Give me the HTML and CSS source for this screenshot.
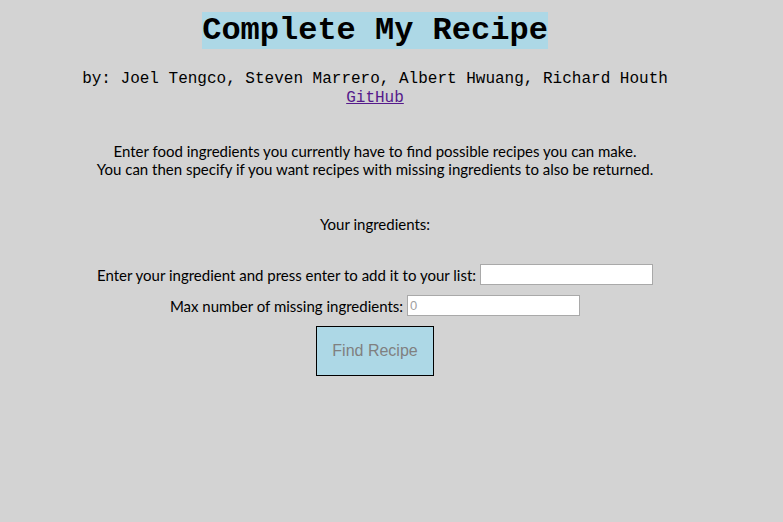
FILE: index.html
```html
<!DOCTYPE html>
<html>
<head>
<meta charset="utf-8">
<link rel="stylesheet" href="styles.css">
</head>
<body>
<div class="page">
<header class="header">
  <h1 class="title"><span class="title-text">Complete My Recipe</span></h1>
  <p class="authors">by: Joel Tengco, Steven Marrero, Albert Hwuang, Richard Houth<br><a class="github" href="#">GitHub</a></p>
</header>
<main class="main">
  <p class="intro">Enter food ingredients you currently have to find possible recipes you can make.<br>You can then specify if you want recipes with missing ingredients to also be returned.</p>
  <p class="list-label">Your ingredients:</p>
  <div class="form">
    <label class="row">Enter your ingredient and press enter to add it to your list: <input class="field" type="text"></label>
    <label class="row">Max number of missing ingredients: <input class="field" type="text" placeholder="0"></label>
    <button class="find">Find Recipe</button>
  </div>
</main>
</div>
</body>
</html>
```
FILE: styles.css
```css
html, body {
  margin: 0;
  padding: 0;
}
body {
  background: #d3d3d3;
  font-family: "Lato", "Open Sans", sans-serif;
  font-size: 15px;
  color: #000;
  text-align: center;
}
.page {
  width: 750px;
}
.header {
  padding-top: 13px;
}
.title {
  margin: 0;
  font-family: "Liberation Mono", "Courier New", monospace;
  font-size: 32px;
  font-weight: bold;
  line-height: 36px;
}
.title-text {
  background: #add8e6;
}
.authors {
  margin: 21px 0 0;
  font-family: "Liberation Mono", "Courier New", monospace;
  font-size: 16px;
  line-height: 19px;
}
.github {
  color: #551a8b;
}
.main {
  padding-top: 34px;
}
.intro {
  margin: 0;
  line-height: 18px;
}
.list-label {
  margin: 37px 0 0;
  line-height: 18px;
}
.form {
  margin-top: 31px;
  display: flex;
  flex-direction: column;
  align-items: center;
  gap: 10px;
}
.row {
  display: flex;
  align-items: center;
  gap: 4px;
  height: 21px;
}
.field {
  width: 173px;
  height: 21px;
  box-sizing: border-box;
  border: 1px solid #a9a9a9;
  background: #fff;
  font-family: "Liberation Sans", Arial, sans-serif;
  font-size: 13px;
  padding: 1px 2px;
  margin: 0;
}
.field::placeholder {
  color: #a0a0a0;
}
.find {
  width: 118px;
  height: 50px;
  margin: 0;
  background: #add8e6;
  border: 1px solid #000;
  color: #808080;
  font-family: "Liberation Sans", Arial, sans-serif;
  font-size: 16px;
}
```
